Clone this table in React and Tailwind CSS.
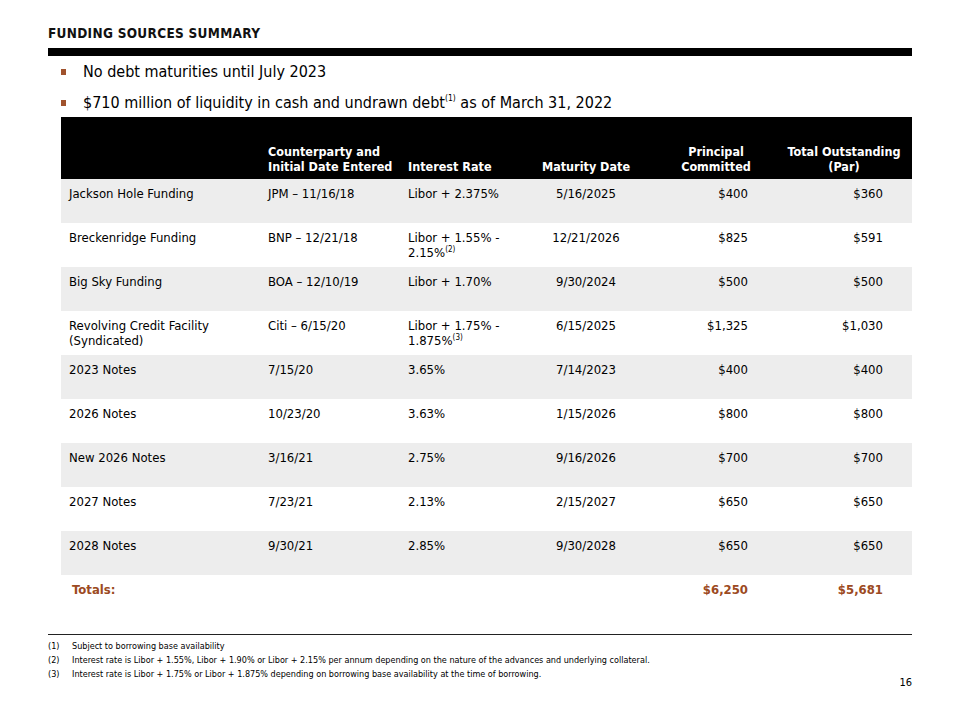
const rows = [
  { name: ["Jackson Hole Funding"], party: "JPM – 11/16/18", rate: ["Libor + 2.375%"], maturity: "5/16/2025", principal: "$400", total: "$360" },
  { name: ["Breckenridge Funding"], party: "BNP – 12/21/18", rate: ["Libor + 1.55% -", "2.15%"], note: "(2)", maturity: "12/21/2026", principal: "$825", total: "$591" },
  { name: ["Big Sky Funding"], party: "BOA – 12/10/19", rate: ["Libor + 1.70%"], maturity: "9/30/2024", principal: "$500", total: "$500" },
  { name: ["Revolving Credit Facility", "(Syndicated)"], party: "Citi – 6/15/20", rate: ["Libor + 1.75% -", "1.875%"], note: "(3)", maturity: "6/15/2025", principal: "$1,325", total: "$1,030" },
  { name: ["2023 Notes"], party: "7/15/20", rate: ["3.65%"], maturity: "7/14/2023", principal: "$400", total: "$400" },
  { name: ["2026 Notes"], party: "10/23/20", rate: ["3.63%"], maturity: "1/15/2026", principal: "$800", total: "$800" },
  { name: ["New 2026 Notes"], party: "3/16/21", rate: ["2.75%"], maturity: "9/16/2026", principal: "$700", total: "$700" },
  { name: ["2027 Notes"], party: "7/23/21", rate: ["2.13%"], maturity: "2/15/2027", principal: "$650", total: "$650" },
  { name: ["2028 Notes"], party: "9/30/21", rate: ["2.85%"], maturity: "9/30/2028", principal: "$650", total: "$650" },
];

const footnotes = [
  ["(1)", "Subject to borrowing base availability"],
  ["(2)", "Interest rate is Libor + 1.55%, Libor + 1.90% or Libor + 2.15% per annum depending on the nature of the advances and underlying collateral."],
  ["(3)", "Interest rate is Libor + 1.75% or Libor + 1.875% depending on borrowing base availability at the time of borrowing."],
];

const cols = "grid grid-cols-[199px_140px_130px_126px_120px_136px]";

function Bullet({ children }) {
  return (
    <div className="flex items-center h-[20px]">
      <span className="w-[5px] h-[6px] bg-[#a0522d] mr-[17px]" />
      <span>{children}</span>
    </div>
  );
}

export default function App() {
  return (
    <div
      className="w-[960px] h-[720px] bg-white text-black px-[48px] flex flex-col"
      style={{ fontFamily: '"DejaVu Sans Condensed", "DejaVu Sans", sans-serif' }}
    >
      {/* title */}
      <h1 className="mt-[25px] text-[13.5px] leading-[16px] font-bold tracking-[0.3px] text-[#111]">
        FUNDING SOURCES SUMMARY
      </h1>
      <div className="mt-[7px] h-[8px] bg-black" />

      {/* bullets */}
      <div className="mt-[6px] pl-[13px] flex flex-col gap-[11px] text-[16px] leading-[20px]">
        <Bullet>No debt maturities until July 2023</Bullet>
        <Bullet>
          $710 million of liquidity in cash and undrawn debt<sup className="text-[8.5px] top-[-7px]">(1)</sup> as of March 31, 2022
        </Bullet>
      </div>

      {/* table */}
      <div className="mt-[4px] ml-[13px] text-[13px] leading-[15px]">
        <div className={`${cols} h-[62px] bg-black text-white font-bold text-[12.5px] items-end pb-[5px]`}>
          <div />
          <div className="pl-[8px]">Counterparty and<br />Initial Date Entered</div>
          <div className="pl-[8px]">Interest Rate</div>
          <div className="text-center pr-[14px]">Maturity Date</div>
          <div className="text-center">Principal<br />Committed</div>
          <div className="text-center">Total Outstanding<br />(Par)</div>
        </div>
        {rows.map((r, i) => (
          <div key={i} className={`${cols} h-[44px] pt-[7px] ${i % 2 === 0 ? "bg-[#ededed]" : "bg-white"}`}>
            <div className="pl-[8px]">
              {r.name.map((l, j) => <div key={j}>{l}</div>)}
            </div>
            <div className="pl-[8px]">{r.party}</div>
            <div className="pl-[8px]">
              {r.rate.map((l, j) => (
                <div key={j}>
                  {l}
                  {j === 1 && <sup className="text-[8px] top-[-5px]">{r.note}</sup>}
                </div>
              ))}
            </div>
            <div className="text-center pr-[14px]">{r.maturity}</div>
            <div className="text-right pr-[28px]">{r.principal}</div>
            <div className="text-right pr-[29px]">{r.total}</div>
          </div>
        ))}
        <div className={`${cols} h-[44px] pt-[6px] text-[#9c4a22] font-bold text-[13px] leading-[17px]`}>
          <div className="pl-[11px]">Totals:</div>
          <div />
          <div />
          <div />
          <div className="text-right pr-[28px]">$6,250</div>
          <div className="text-right pr-[29px]">$5,681</div>
        </div>
      </div>

      {/* footnotes */}
      <div className="mt-[15px] border-t-[1.5px] border-[#222] pt-[4px] flex justify-between items-end">
        <div className="text-[9px] leading-[14px]">
          {footnotes.map(([n, t]) => (
            <div key={n} className="flex">
              <span className="w-[24px] shrink-0">{n}</span>
              <span>{t}</span>
            </div>
          ))}
        </div>
        <div className="text-[11px] leading-[14px] mb-[-9px]">16</div>
      </div>
    </div>
  );
}
